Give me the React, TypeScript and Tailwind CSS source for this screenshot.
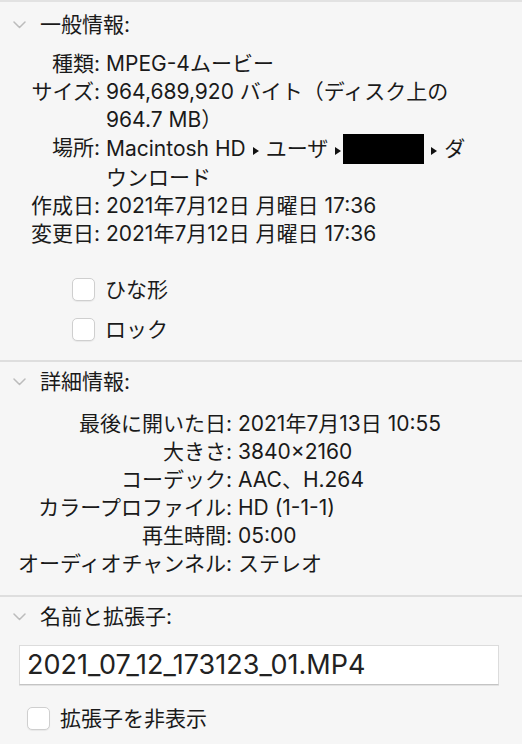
import React from "react";

// 折りたたみの矢印
const Chevron = () => (
  <svg width="13" height="8" viewBox="0 0 13 8" fill="none" stroke="#bcbcbc" strokeWidth="1.5" strokeLinecap="round" strokeLinejoin="round">
    <path d="M1 1l5.5 5.5L12 1" />
  </svg>
);

// パス区切りの三角
const Tri = () => (
  <svg width="6" height="8" viewBox="0 0 6 8" className="inline-block mx-[7px] align-[1px]">
    <path d="M0 0L6 4L0 8z" fill="#111" />
  </svg>
);

const Checkbox = ({ label }: { label: string }) => (
  <div className="flex items-center h-[23px]">
    <div className="w-[23px] h-[23px] rounded-[5px] border border-[#cfcfcf] bg-white shadow-[0_1px_1px_rgba(0,0,0,0.06)]" />
    <span className="ml-[10px]">{label}</span>
  </div>
);

const SectionHeader = ({ title, h }: { title: string; h: string }) => (
  <div className={`flex items-center ${h}`}>
    <div className="w-[40px] flex justify-center pr-[2px]">
      <Chevron />
    </div>
    <span>{title}</span>
  </div>
);

const Divider = () => <div className="h-[2px] bg-[#dedede]" />;

const general: [string, React.ReactNode][] = [
  ["種類:", "MPEG-4ムービー"],
  [
    "サイズ:",
    <>
      964,689,920 バイト（ディスク上の
      <br />
      964.7 MB）
    </>,
  ],
  [
    "場所:",
    <>
      Macintosh HD
      <Tri />
      ユーザ
      <Tri />
      <span className="inline-block w-[81px] h-[30px] bg-black align-[-8px] -ml-[5px]" />
      <Tri />
      ダ
      <br />
      ウンロード
    </>,
  ],
  ["作成日:", "2021年7月12日 月曜日 17:36"],
  ["変更日:", "2021年7月12日 月曜日 17:36"],
];

const details: [string, string][] = [
  ["最後に開いた日:", "2021年7月13日 10:55"],
  ["大きさ:", "3840×2160"],
  ["コーデック:", "AAC、H.264"],
  ["カラープロファイル:", "HD (1-1-1)"],
  ["再生時間:", "05:00"],
  ["オーディオチャンネル:", "ステレオ"],
];

export default function App() {
  return (
    <div
      className="w-[522px] h-[744px] overflow-hidden bg-[#f6f6f6] text-[#1a1a1a] text-[21px] leading-[28px]"
      style={{ fontFamily: 'Inter, "Noto Sans CJK JP", sans-serif' }}
    >
      <div className="h-[2px] bg-[#e2e2e2]" />

      {/* 一般情報 */}
      <SectionHeader title="一般情報:" h="h-[46px]" />
      <div className="mt-[2px] grid grid-cols-[100px_1fr] gap-x-[6px]">
        {general.map(([k, v]) => (
          <React.Fragment key={k}>
            <div className="text-right whitespace-nowrap">{k}</div>
            <div className="whitespace-nowrap">{v}</div>
          </React.Fragment>
        ))}
      </div>
      <div className="pl-[72px] pt-[30px] pb-[19px] flex flex-col gap-[17px]">
        <Checkbox label="ひな形" />
        <Checkbox label="ロック" />
      </div>
      <Divider />

      {/* 詳細情報 */}
      <SectionHeader title="詳細情報:" h="h-[40px]" />
      <div className="mt-[8px] grid grid-cols-[232px_1fr] gap-x-[6px]">
        {details.map(([k, v]) => (
          <React.Fragment key={k}>
            <div className="text-right whitespace-nowrap">{k}</div>
            <div>{v}</div>
          </React.Fragment>
        ))}
      </div>
      <div className="h-[17px]" />
      <Divider />

      {/* 名前と拡張子 */}
      <SectionHeader title="名前と拡張子:" h="h-[40px]" />
      <div className="mt-[8px] ml-[19px] w-[480px] h-[40px] bg-white border border-[#dcdcdc] border-b-[#c4c4c4] shadow-[0_1px_0_rgba(0,0,0,0.08)] flex items-center pl-[7px] text-[27px] text-[#222]">
        2021_07_12_173123_01.MP4
      </div>
      <div className="pl-[27px] mt-[22px]">
        <Checkbox label="拡張子を非表示" />
      </div>
    </div>
  );
}
